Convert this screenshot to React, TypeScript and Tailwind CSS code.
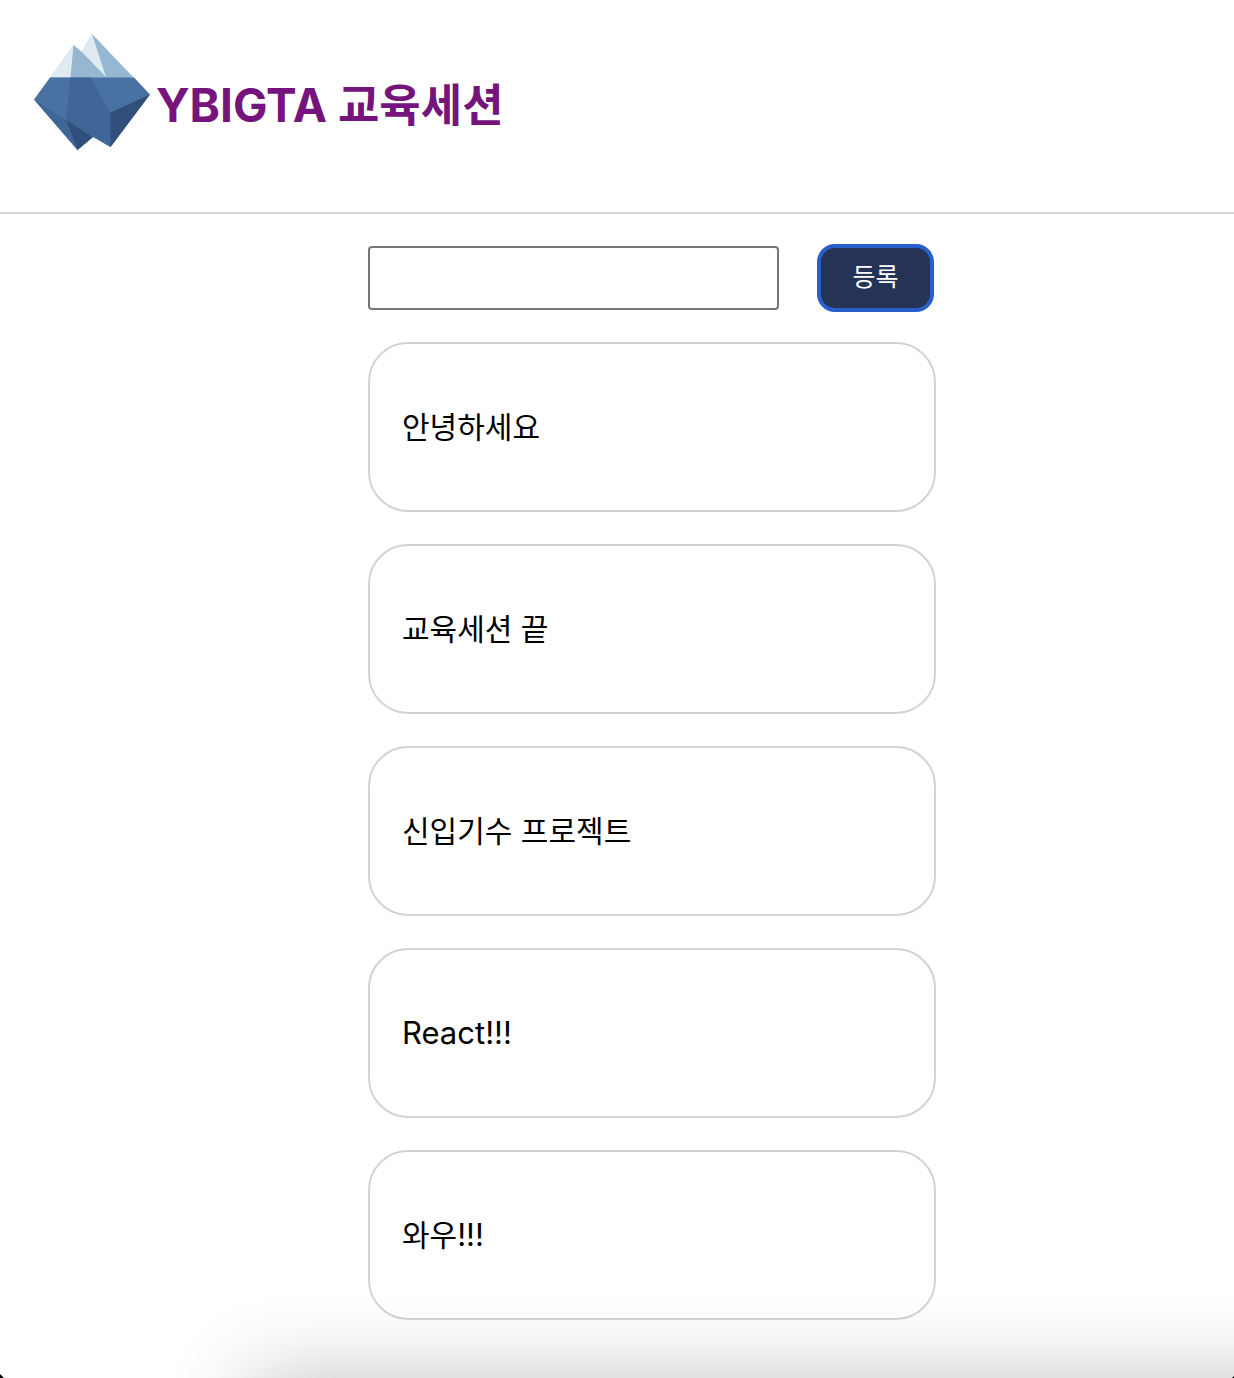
import { useState } from "react";
import type { FormEvent } from "react";

const initialPosts = ["안녕하세요", "교육세션 끝", "신입기수 프로젝트", "React!!!", "와우!!!"];

function IcebergLogo() {
  return (
    <svg viewBox="34 34 116 116" className="size-[116px] shrink-0" aria-hidden="true">
      <path d="M92 34 134 78H50L73.500 45 82 52Z" fill="#95b7d1" />
      <path d="M92 34 106 77 82 52Z" fill="#e0eaf1" />
      <path d="M73.500 45 70.500 77.500H50Z" fill="#e0eaf1" />
      <path d="M50 77.500H134L150 94.500 110.500 147 93 137 77.500 150 34 99.500Z" fill="#4971a3" />
      <path d="M70.500 77.500H90.500L110.500 112.500V147L66 120Z" fill="#406698" />
      <path d="M34 99.500 66 120 77.500 150Z" fill="#406698" />
      <path d="M66 120 93 137 77.500 150Z" fill="#314f7b" />
      <path d="M110.500 112.500 150 94.500 110.500 147Z" fill="#314f7b" />
    </svg>
  );
}

function PostText({ text }: { text: string }) {
  return (
    <p className="text-3xl leading-[38px]">
      {text.split(/([\x21-\x7e]+)/).map((part, index) =>
        index % 2 ? (
          <span key={index} className="text-[31px]">
            {part}
          </span>
        ) : (
          part
        ),
      )}
    </p>
  );
}

export default function App() {
  const [posts, setPosts] = useState(initialPosts);
  const [draft, setDraft] = useState("");

  function submit(event: FormEvent) {
    event.preventDefault();
    if (!draft.trim()) return;
    setPosts([...posts, draft.trim()]);
    setDraft("");
  }

  return (
    <div className="relative min-h-screen overflow-hidden bg-white font-['Inter','Noto_Sans_CJK_KR',sans-serif] text-black">
      <header className="border-b-2 border-[#d3d3d3] px-[34px] pt-[34px] pb-[62px]">
        <a href="#" className="inline-flex items-center gap-1.5 align-top text-[#75147c]">
          <IcebergLogo />
          <h1 className="mt-[26px] text-[46px] leading-12 font-bold">
            YBIGTA <span className="text-[45px]">교육세션</span>
          </h1>
        </a>
      </header>

      <main className="mx-auto max-w-[638px] pt-[30px] pb-[58px] pl-[70px]">
        <form onSubmit={submit} className="flex items-center justify-between pr-0.5">
          <input
            type="text"
            aria-label="내용"
            value={draft}
            onChange={(event) => setDraft(event.target.value)}
            className="h-16 w-[411px] min-w-0 rounded border-2 border-[#767676] px-2 text-[26px] outline-none"
          />
          <button
            type="submit"
            className="h-[68px] w-[117px] rounded-[18px] border-4 border-[#285fca] bg-[#243356] text-[25px] text-white"
          >
            등록
          </button>
        </form>

        <ul className="mt-[30px] flex flex-col gap-8">
          {posts.map((post, index) => (
            <li key={index} className="rounded-[40px] border-2 border-[#d3d3d3] px-8 py-16">
              <PostText text={post} />
            </li>
          ))}
        </ul>
      </main>

      <div className="pointer-events-none absolute top-full right-[-200px] left-[248px] h-40 shadow-[0_0_84px_rgba(0,0,0,0.24)]" />
      <svg viewBox="0 0 4 4" className="absolute bottom-0 left-0 size-1" aria-hidden="true">
        <path d="M0 0 4 4H0Z" />
      </svg>
      <svg viewBox="0 0 2 2" className="absolute right-0 bottom-0 size-0.5" aria-hidden="true">
        <path d="M2 0V2H0Z" />
      </svg>
    </div>
  );
}
